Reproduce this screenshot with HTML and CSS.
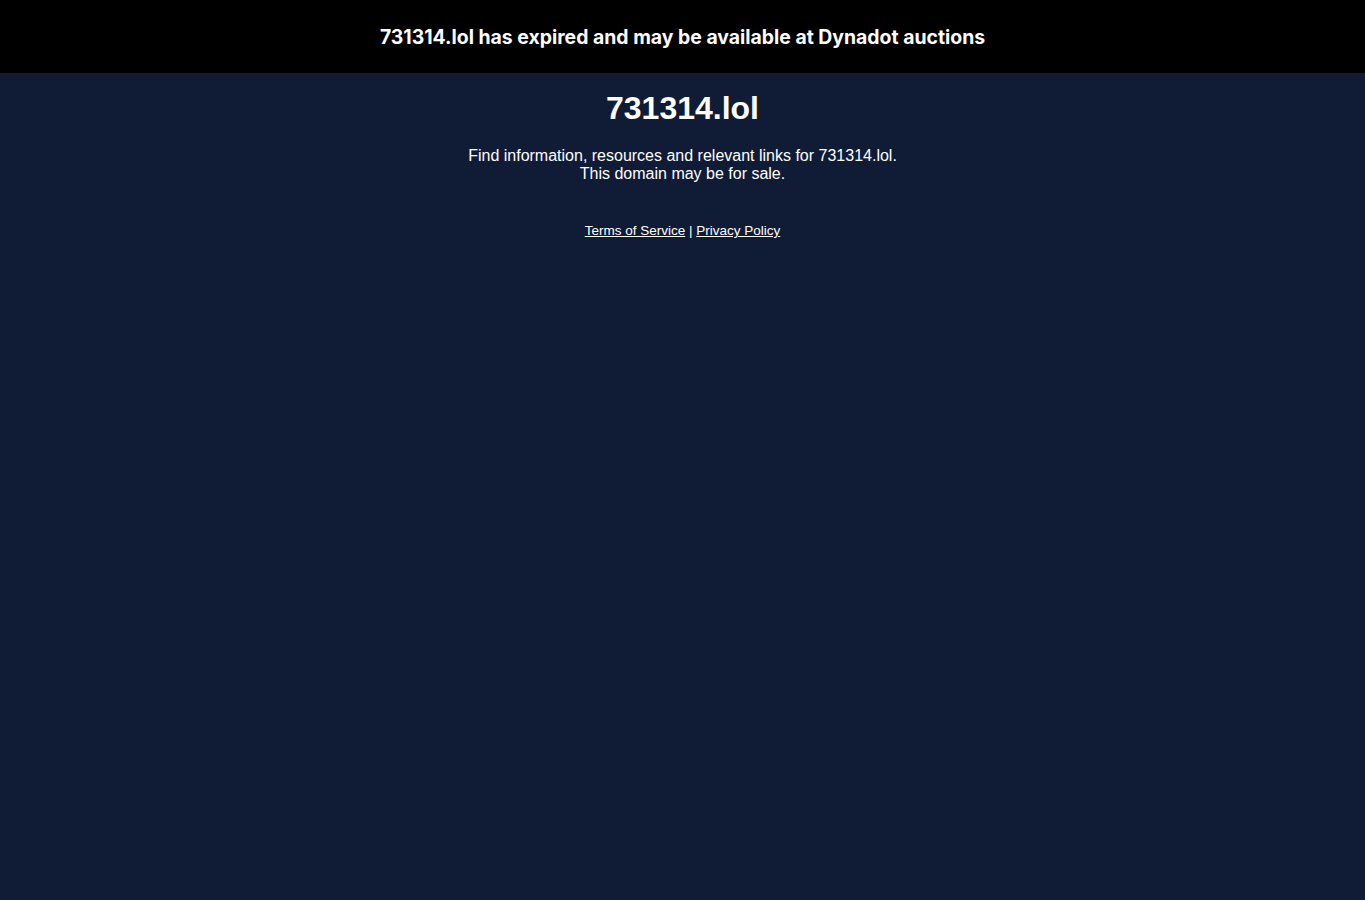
FILE: index.html
```html
<!DOCTYPE html>
<html>
<head>
<meta charset="utf-8">
<title>731314.lol</title>
<link rel="stylesheet" href="styles.css">
</head>
<body>
<div class="banner">731314.lol has expired and may be available at Dynadot auctions</div>
<main class="content">
  <h1 class="title">731314.lol</h1>
  <p class="desc">Find information, resources and relevant links for 731314.lol.<br>This domain may be for sale.</p>
  <div class="links"><a href="#">Terms of Service</a> | <a href="#">Privacy Policy</a></div>
</main>
</body>
</html>
```
FILE: styles.css
```css
html, body {
  margin: 0;
  padding: 0;
  height: 100%;
}
body {
  background: #101b36;
  color: #fff;
  font-family: "Liberation Sans", Arial, sans-serif;
}
.banner {
  background: #000;
  height: 73px;
  padding-top: 1px;
  box-sizing: border-box;
  display: flex;
  align-items: center;
  justify-content: center;
  font-family: Inter, "Liberation Sans", sans-serif;
  font-weight: 700;
  font-size: 19.4px;
}
.content {
  text-align: center;
}
.title {
  margin: 17px 0 0;
  font-size: 32px;
  font-weight: 700;
  line-height: 37px;
}
.desc {
  margin: 20px 0 0;
  font-size: 16px;
  line-height: 18px;
}
.links {
  margin-top: 40px;
  font-size: 13.5px;
  line-height: 15px;
}
.links a {
  color: #fff;
}
```
